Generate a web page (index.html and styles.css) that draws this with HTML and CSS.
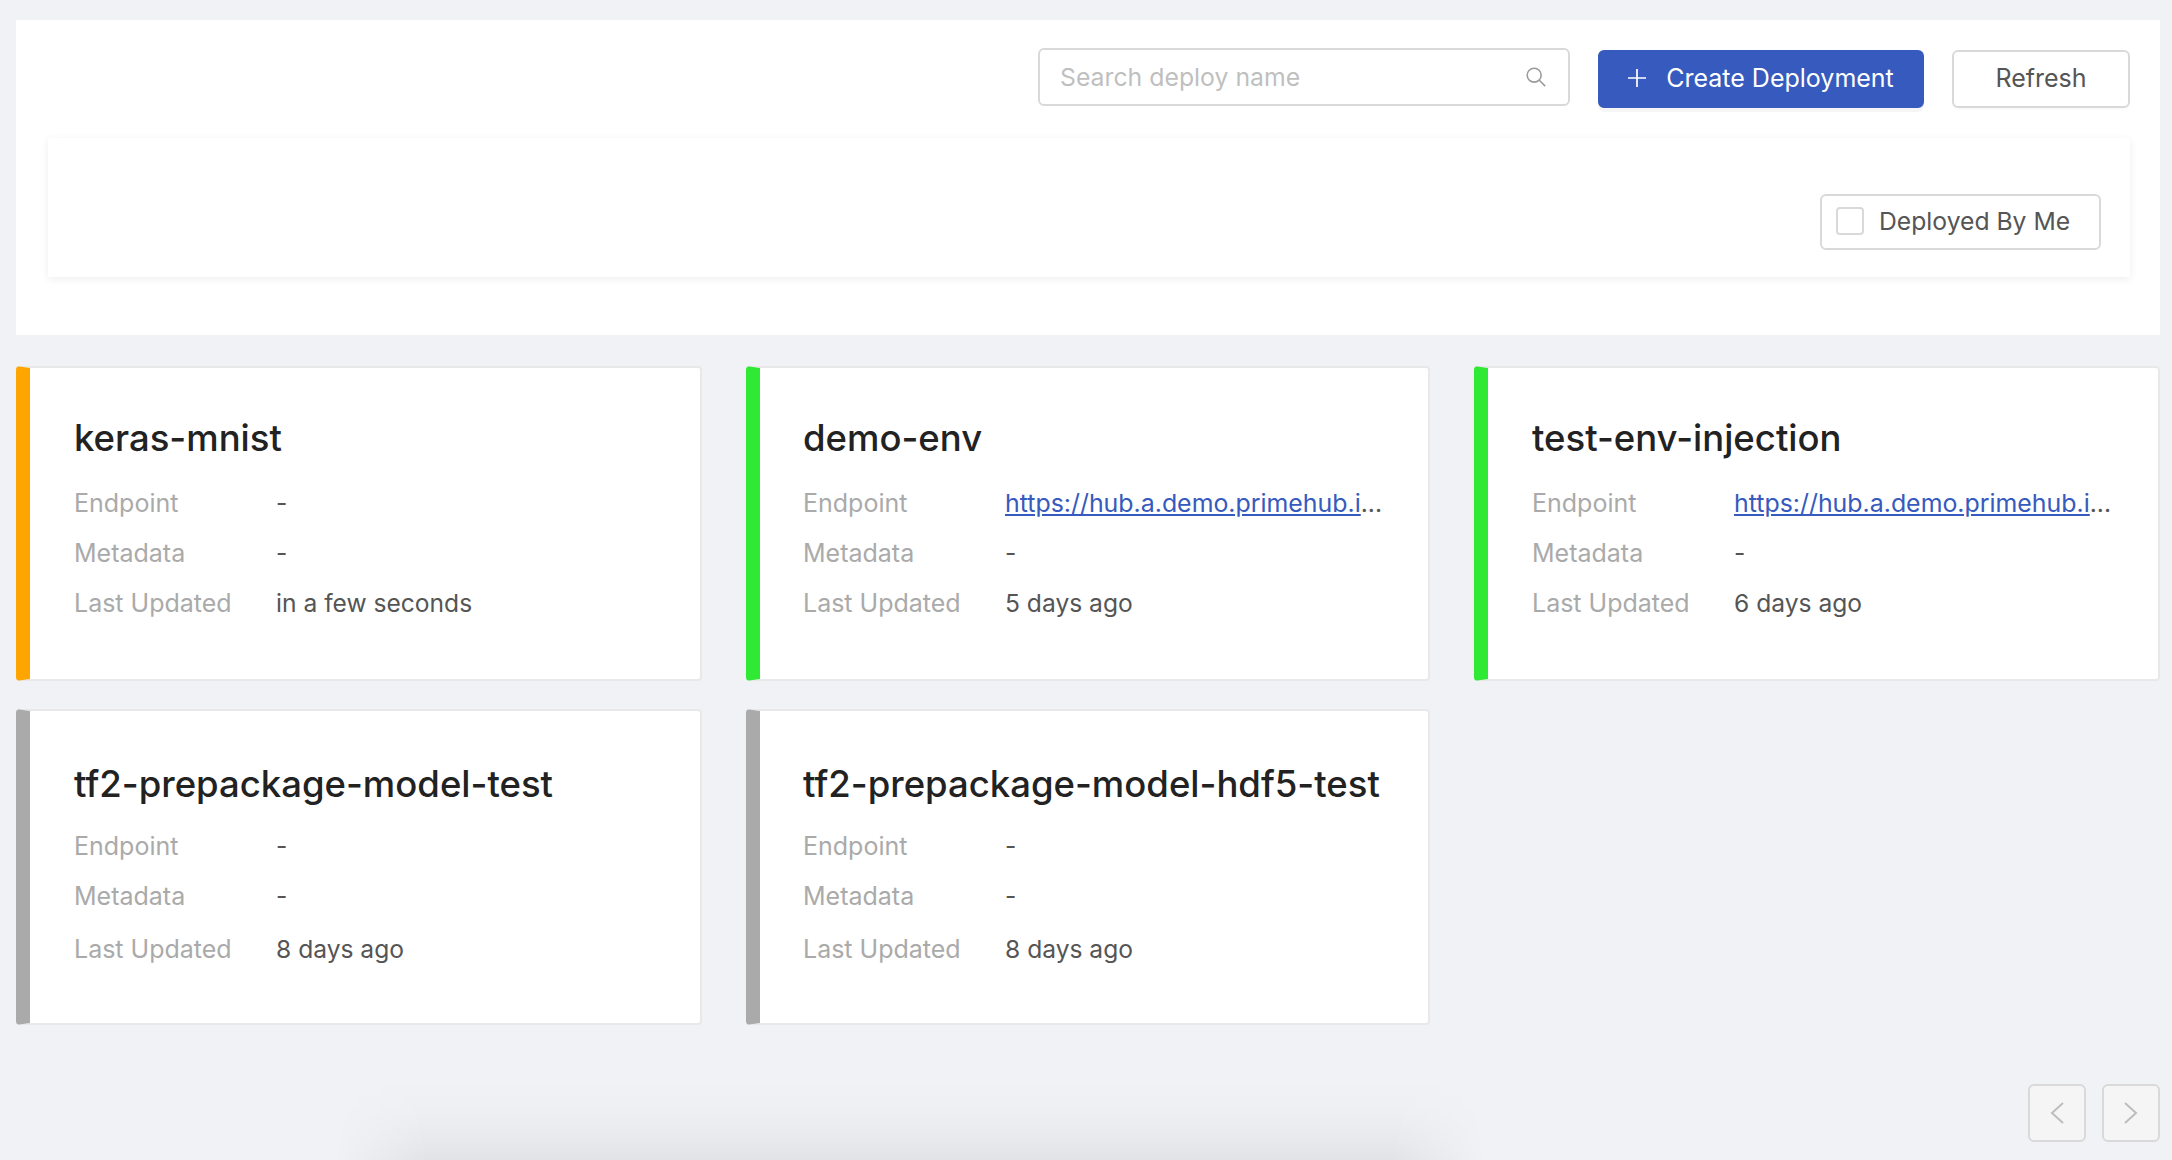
FILE: index.html
```html
<!DOCTYPE html>
<html lang="en">

<head>
  <meta charset="UTF-8">
  <title>Deployments</title>
  <link rel="stylesheet" href="styles.css">
</head>

<body>
  <section class="panel">
    <div class="toolbar">
      <div class="search">
        <span class="search-text">Search deploy name</span>
        <svg class="search-icon" viewBox="0 0 24 24" fill="none" stroke="#9a9a9a" stroke-width="1.7">
          <circle cx="10" cy="10" r="7.6"></circle>
          <path d="M15.6 15.6L22 22"></path>
        </svg>
      </div>
      <a class="btn btn-primary">
        <svg class="plus-icon" viewBox="0 0 20 20" stroke="#fff" stroke-width="1.9">
          <path d="M10 0V20M0 10H20"></path>
        </svg>
        Create Deployment
      </a>
      <a class="btn btn-plain">Refresh</a>
    </div>
    <div class="filter">
      <label class="check-btn"><span class="check-box"></span>Deployed By Me</label>
    </div>
  </section>

  <div class="cards">
    <div class="card card-orange">
      <h2>keras-mnist</h2>
      <div class="row"><span class="label">Endpoint</span><div class="value">-</div></div>
      <div class="row"><span class="label">Metadata</span><div class="value">-</div></div>
      <div class="row"><span class="label">Last Updated</span><div class="value">in a few seconds</div></div>
    </div>
    <div class="card card-green">
      <h2>demo-env</h2>
      <div class="row"><span class="label">Endpoint</span><div class="value"><a href="#">https://hub.a.demo.primehub.i</a>...</div></div>
      <div class="row"><span class="label">Metadata</span><div class="value">-</div></div>
      <div class="row"><span class="label">Last Updated</span><div class="value">5 days ago</div></div>
    </div>
    <div class="card card-green">
      <h2>test-env-injection</h2>
      <div class="row"><span class="label">Endpoint</span><div class="value"><a href="#">https://hub.a.demo.primehub.i</a>...</div></div>
      <div class="row"><span class="label">Metadata</span><div class="value">-</div></div>
      <div class="row"><span class="label">Last Updated</span><div class="value">6 days ago</div></div>
    </div>
    <div class="card card-grey">
      <h2>tf2-prepackage-model-test</h2>
      <div class="row"><span class="label">Endpoint</span><div class="value">-</div></div>
      <div class="row"><span class="label">Metadata</span><div class="value">-</div></div>
      <div class="row"><span class="label">Last Updated</span><div class="value">8 days ago</div></div>
    </div>
    <div class="card card-grey">
      <h2>tf2-prepackage-model-hdf5-test</h2>
      <div class="row"><span class="label">Endpoint</span><div class="value">-</div></div>
      <div class="row"><span class="label">Metadata</span><div class="value">-</div></div>
      <div class="row"><span class="label">Last Updated</span><div class="value">8 days ago</div></div>
    </div>
  </div>

  <div class="pager">
    <a class="page-btn">
      <svg viewBox="0 0 14 22" fill="none" stroke="#bdbdbd" stroke-width="2"><path d="M13 1L2 11L13 21"></path></svg>
    </a>
    <a class="page-btn">
      <svg viewBox="0 0 14 22" fill="none" stroke="#bdbdbd" stroke-width="2"><path d="M1 1L12 11L1 21"></path></svg>
    </a>
  </div>

  <div class="drop-shadow"></div>
</body>

</html>
```

FILE: styles.css
```css
html {
  height: 100%;
  overflow: hidden;
}

body {
  font-family: Inter, "Noto Sans", sans-serif;
  height: 100%;
  margin: 0;
  padding: 20px 12px 0 16px;
  box-sizing: border-box;
  background-color: #f0f2f5;
  color: #555;
  overflow: hidden;
  position: relative;
}

.panel {
  background-color: #fff;
  height: 315px;
  padding: 28px 30px 0 32px;
  box-sizing: border-box;
}

.toolbar {
  display: flex;
  justify-content: flex-end;
  align-items: flex-start;
  gap: 28px;
  height: 90px;
}

.search {
  width: 532px;
  height: 58px;
  border: 2px solid #d9d9d9;
  border-radius: 6px;
  box-sizing: border-box;
  display: flex;
  align-items: center;
  justify-content: space-between;
  padding: 0 21px 0 20px;
  font-size: 24.8px;
  color: #bfbfbf;
}

.search-icon {
  width: 22px;
  height: 22px;
}

.btn {
  height: 58px;
  margin-top: 2px;
  padding-bottom: 2px;
  display: flex;
  align-items: center;
  justify-content: center;
  box-sizing: border-box;
  border: 2px solid #d9d9d9;
  border-radius: 6px;
  background-color: #fff;
  font-size: 25px;
  box-shadow: 0 2px 0 rgba(0, 0, 0, 0.015);
}

.btn-plain {
  width: 178px;
}

.btn-primary {
  width: 326px;
  gap: 20px;
  color: #fff;
  background-color: #365abd;
  border-color: #365abd;
  box-shadow: 0 4px 0 rgba(0, 0, 0, 0.035);
}

.plus-icon {
  width: 18px;
  height: 18px;
}

.filter {
  height: 139px;
  padding: 56px 29px 0 0;
  box-sizing: border-box;
  display: flex;
  justify-content: flex-end;
  align-items: flex-start;
  background-color: #fff;
  box-shadow: 0 2px 8px rgba(0, 0, 0, 0.07);
}

.check-btn {
  width: 281px;
  height: 56px;
  display: flex;
  align-items: center;
  gap: 15px;
  padding: 0 0 2px 14px;
  box-sizing: border-box;
  border: 2px solid #d9d9d9;
  border-radius: 6px;
  font-size: 24.7px;
}

.check-box {
  width: 28px;
  height: 28px;
  box-sizing: border-box;
  border: 2px solid #d9d9d9;
  border-radius: 4px;
}

.cards {
  display: grid;
  grid-template-columns: 686px 684px 686px;
  grid-template-rows: 315px 316px;
  column-gap: 44px;
  row-gap: 28px;
  margin-top: 31px;
}

.card {
  background-color: #fff;
  border: 2px solid #e8e8e8;
  border-left: 14px solid #aaa;
  border-radius: 4px;
  padding: 47px 30px 0 44px;
  box-sizing: border-box;
  min-width: 0;
}

.card:nth-child(3n+2) {
  padding-left: 43px;
}

.card-orange {
  border-left-color: #ffa500;
}

.card-green {
  border-left-color: #2fe934;
}

.card-grey {
  border-left-color: #aaa;
}

.card h2 {
  margin: 0 0 17px;
  font-size: 36.5px;
  line-height: 46px;
  font-weight: 500;
  color: #222;
  white-space: nowrap;
}

/* second row sits a little lower in its card */
.card-grey h2 {
  padding-top: 3px;
  margin-bottom: 14px;
}

.card-grey .row:last-child {
  padding-top: 3px;
}

.row {
  display: flex;
  height: 50px;
  align-items: center;
  font-size: 25px;
}

.label {
  width: 202px;
  flex: none;
  color: #aaa;
}

.value {
  width: 376px;
  white-space: nowrap;
  color: #555;
  font-size: 24.6px;
}

.value a {
  color: #365abd;
  font-size: 24.9px;
}

.pager {
  position: absolute;
  right: 12px;
  bottom: 18px;
  display: flex;
  gap: 16px;
}

.page-btn {
  width: 58px;
  height: 58px;
  box-sizing: border-box;
  border: 2px solid #d9d9d9;
  border-radius: 6px;
  background-color: #f5f5f5;
  display: flex;
  align-items: center;
  justify-content: center;
}

.page-btn svg {
  width: 14px;
  height: 22px;
}

.drop-shadow {
  position: absolute;
  left: 335px;
  bottom: 0;
  width: 1150px;
  height: 80px;
  background: linear-gradient(to top, rgba(0, 0, 0, 0.06), rgba(0, 0, 0, 0.035) 25%, rgba(0, 0, 0, 0.012) 60%, transparent);
  -webkit-mask-image: linear-gradient(to right, transparent, #000 8%, #000 92%, transparent);
  mask-image: linear-gradient(to right, transparent, #000 8%, #000 92%, transparent);
}
```
